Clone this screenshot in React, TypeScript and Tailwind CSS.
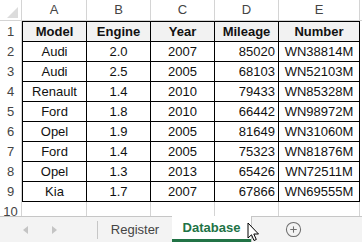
import { CirclePlus } from "lucide-react";

const rows = [
  ["Audi", "2.0", "2007", "85020", "WN38814M"],
  ["Audi", "2.5", "2005", "68103", "WN52103M"],
  ["Renault", "1.4", "2010", "79433", "WN85328M"],
  ["Ford", "1.8", "2010", "66442", "WN98972M"],
  ["Opel", "1.9", "2005", "81649", "WN31060M"],
  ["Ford", "1.4", "2005", "75323", "WN81876M"],
  ["Opel", "1.3", "2013", "65426", "WN72511M"],
  ["Kia", "1.7", "2007", "67866", "WN69555M"],
];

const heads = ["Model", "Engine", "Year", "Mileage", "Number"];

// widths per column, written out so tailwind picks them up
const colW = ["w-[65px]", "w-[64px]", "w-[64px]", "w-[64px]", "w-[81px]"];

function RowNum({ n, tall }: { n: number; tall?: boolean }) {
  return (
    <div
      className={`${tall ? "h-[21px]" : "h-[20px]"} w-[22px] shrink-0 border-r border-[#d4d4d4] flex items-center justify-center text-[13px] text-[#444]`}
    >
      {n}
    </div>
  );
}

export default function App() {
  return (
    <div
      className="w-[362px] h-[242px] overflow-hidden bg-white relative text-[#111]"
      style={{ fontFamily: '"Liberation Sans", Arial, sans-serif' }}
    >
      <div className="h-[216px] overflow-hidden">
        {/* column letters */}
        <div className="flex h-[21px] border-b border-[#d4d4d4]">
          <div className="w-[22px] shrink-0 border-r border-[#d4d4d4] relative">
            <svg width="21" height="20" className="absolute left-0 top-0">
              <polygon points="7,18 18,18 18,7" fill="#dcdcdc" />
            </svg>
          </div>
          {["A", "B", "C", "D", "E"].map((l, i) => (
            <div
              key={l}
              className={`${colW[i]} shrink-0 border-r border-[#d4d4d4] flex items-center justify-center text-[13px] text-[#444]`}
            >
              {l}
            </div>
          ))}
        </div>

        {/* row 1 headers */}
        <div className="flex">
          <RowNum n={1} tall />
          {heads.map((h, i) => (
            <div
              key={h}
              className={`${colW[i]} h-[21px] shrink-0 bg-[#f2f2f2] border-t border-b border-r border-black ${i === 0 ? "border-l" : ""} flex items-center justify-center text-[13px] font-bold`}
            >
              {h}
            </div>
          ))}
        </div>

        {rows.map((r, ri) => (
          <div key={ri} className="flex">
            <RowNum n={ri + 2} />
            {r.map((v, i) => (
              <div
                key={i}
                className={`${colW[i]} h-[20px] shrink-0 border-b border-r border-black ${i === 0 ? "border-l" : ""} flex items-center text-[13px] ${i === 3 ? "justify-end pr-[3px]" : "justify-center"}`}
              >
                {v}
              </div>
            ))}
          </div>
        ))}

        {/* empty row 10 */}
        <div className="flex">
          <RowNum n={10} />
          {colW.map((w, i) => (
            <div key={i} className={`${w} h-[20px] shrink-0 border-r border-[#d4d4d4]`} />
          ))}
        </div>
      </div>

      {/* sheet tabs */}
      <div className="flex h-[26px]">
        <div className="w-[172px] shrink-0 flex items-center bg-[#f3f3f3] border-t border-[#c6c6c6]">
          <div className="w-[97px] flex items-center">
            <svg width="6" height="8" className="ml-[23px]">
              <polygon points="5,0 5,8 0,4" fill="#c4c4c4" />
            </svg>
            <svg width="6" height="8" className="ml-[23px]">
              <polygon points="0,0 0,8 5,4" fill="#c4c4c4" />
            </svg>
          </div>
          <div className="w-px h-[18px] bg-[#c6c6c6]" />
          <div className="flex-1 text-center text-[13px] text-[#444]">Register</div>
        </div>
        <div className="w-[79px] shrink-0 bg-white flex flex-col">
          <div className="flex-1 flex items-center justify-center text-[13px] font-bold text-[#217346]">
            Database
          </div>
          <div className="h-[3px] bg-[#217346]" />
        </div>
        <div className="flex-1 bg-[#f3f3f3] border-t border-l border-[#c6c6c6] flex items-center">
          <CirclePlus size={17} strokeWidth={1.5} color="#6f6f6f" className="ml-[33px]" />
        </div>
      </div>

      {/* mouse pointer */}
      <svg width="13" height="20" viewBox="0 0 13 20" className="absolute left-[247px] top-[222px]">
        <path
          d="M1 1 L1 16 L4.5 12.8 L7 18.5 L9.3 17.5 L6.8 12 L11.5 12 Z"
          fill="#fff"
          stroke="#000"
          strokeWidth="1"
          strokeLinejoin="round"
        />
      </svg>
    </div>
  );
}
